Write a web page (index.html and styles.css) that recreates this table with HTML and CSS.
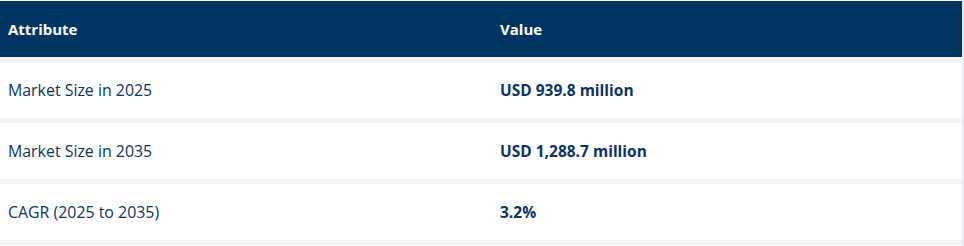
FILE: index.html
```html
<!DOCTYPE html>
<html>
<head>
<meta charset="utf-8">
<link rel="stylesheet" href="styles.css">
</head>
<body>
<div class="page">
<table class="data">
  <thead>
    <tr><th class="c1">Attribute</th><th>Value</th></tr>
  </thead>
  <tbody>
    <tr><td>Market Size in 2025</td><td class="v">USD 939.8 million</td></tr>
    <tr><td>Market Size in 2035</td><td class="v">USD 1,288.7 million</td></tr>
    <tr><td>CAGR (2025 to 2035)</td><td class="v">3.2%</td></tr>
  </tbody>
</table>
</div>
</body>
</html>
```
FILE: styles.css
```css
html { background: #ebeaf2; }
body { margin: 0; }
.page {
  width: 962px;
  height: 246px;
  background: #ffffff;
  padding-top: 1px;
  box-sizing: border-box;
}
.data {
  width: 962px;
  border-collapse: collapse;
  font-family: "Open Sans", "Noto Sans", sans-serif;
  font-size: 15.9px;
  color: #0d3461;
}
.data th {
  background: #003462;
  color: #ffffff;
  font-weight: 700;
  font-size: 15px;
  text-align: left;
  height: 56px;
  padding: 0 8px;
  border-bottom: 5px solid #f4f4f4;
}
.data th.c1 { width: 476px; }
.data td {
  height: 56px;
  padding: 0 8px;
  border-bottom: 5px solid #f4f4f4;
}
.data td.v { font-weight: 700; font-size: 15.5px; }
```
